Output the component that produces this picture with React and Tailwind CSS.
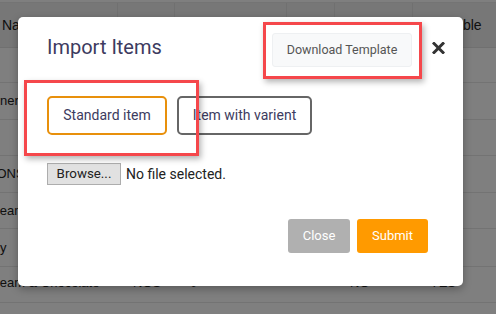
import React from "react";

const rows = [
  { name: "", shift: "ml-0", code: "", qty: "", a: "", b: "", h: "h-[35px]" },
  { name: "Corner", shift: "ml-[-21px]", code: "", qty: "", a: "", b: "", h: "h-[37px]" },
  { name: "", shift: "ml-0", code: "", qty: "", a: "", b: "", h: "h-[36px]" },
  { name: "ADDONS", shift: "ml-[-31px]", code: "", qty: "", a: "", b: "", h: "h-[37px]" },
  { name: "Ice Cream", shift: "ml-[-35px]", code: "", qty: "", a: "", b: "", h: "h-[36px]" },
  { name: "Candy", shift: "ml-[-31px]", code: "", qty: "", a: "", b: "", h: "h-[38px]" },
  { name: "Ice Cream & Chocolate", shift: "ml-[-35px]", code: "NOS", qty: "0", a: "NO", b: "YES", h: "h-[36px] pb-[3px]" },
  { name: "", shift: "ml-0", code: "", qty: "", a: "", b: "", h: "h-[36px]" },
];

const Table = () => (
  <div className="w-full bg-white text-[#222] font-['Liberation_Sans',Arial,sans-serif] text-[13px]">
    <div className="h-[3px] border-b border-[#e8e8e8]" />
    <div className="flex h-[45px] items-center bg-[#eeeeee] border-b border-[#e0e0e0] text-[14px]">
      <div className="w-[118px] pl-[2px] border-r border-[#e0e0e0] h-full flex items-center">Name</div>
      <div className="w-[57px] border-r border-[#e0e0e0] h-full" />
      <div className="w-[112px] border-r border-[#e0e0e0] h-full" />
      <div className="w-[48px] border-r border-[#e0e0e0] h-full" />
      <div className="w-[78px] border-r border-[#e0e0e0] h-full" />
      <div className="flex-1 pl-[12px] h-full flex items-center">Available</div>
    </div>
    {rows.map((r, i) => (
      <div key={i} className={`flex ${r.h} items-center border-b border-[#e6e6e6]`}>
        <div className="w-[133px] shrink-0 overflow-hidden whitespace-nowrap">
          <span className={`inline-block ${r.shift}`}>{r.name}</span>
        </div>
        <div className="w-[57px] shrink-0">{r.code}</div>
        <div className="w-[160px] shrink-0">{r.qty}</div>
        <div className="w-[80px] shrink-0">{r.a}</div>
        <div className="flex-1">{r.b}</div>
      </div>
    ))}
  </div>
);

const CloseIcon = () => (
  <svg width="13" height="12" viewBox="0 0 13 12" className="block">
    <path d="M2 1.5 L11 10.5 M11 1.5 L2 10.5" stroke="#333" strokeWidth="3" strokeLinecap="square" />
  </svg>
);

export default function App() {
  return (
    <div className="relative w-[496px] h-[314px] overflow-hidden bg-white">
      <Table />
      <div className="absolute inset-0 bg-black/50" />

      <div className="absolute left-[18px] top-[17px] w-[445px] h-[269px] bg-white rounded-[5px] shadow-[0_3px_9px_rgba(0,0,0,0.3)] font-['Roboto',sans-serif] px-[29px] pt-[16px]">
        <div className="flex items-start">
          <h2 className="text-[20px] leading-[28px] text-[#3d3b60] font-normal">Import Items</h2>
          <button className="ml-auto mr-[20px] h-[34px] w-[140px] bg-[#f8f9fa] border border-[#eef0f2] rounded-[3px] text-[12.5px] text-[#555]">
            Download Template
          </button>
          <div className="mt-[9px] mr-[-11px]">
            <CloseIcon />
          </div>
        </div>

        <div className="flex gap-[10px] mt-[29px]">
          <button className="h-[39px] w-[120px] border-2 border-[#e8900c] rounded-[5px] text-[14px] text-[#3d3b60]">
            Standard item
          </button>
          <button className="h-[39px] w-[135px] border-2 border-[#666] rounded-[5px] text-[14px] text-[#3d3b60]">
            Item with varient
          </button>
        </div>

        <div className="flex items-center mt-[28px] text-[13.33px] text-[#222]">
          <span className="h-[22px] w-[74px] flex items-center justify-center bg-[#e1e1e1] border border-[#adadad]">
            Browse...
          </span>
          <span className="ml-[5px] text-[14px]">No file selected.</span>
        </div>

        <div className="flex justify-end gap-[7px] mt-[34px] mr-[6px]">
          <button className="h-[34px] w-[62px] bg-[#b0b0b0] rounded-[3px] text-white text-[13px]">Close</button>
          <button className="h-[34px] w-[71px] bg-[#ff9a00] rounded-[3px] text-white text-[13px]">Submit</button>
        </div>
      </div>

      <div className="absolute left-[24px] top-[80px] w-[175px] h-[76px] border-[3px] border-[#f5474b] shadow-[2px_3px_6px_rgba(0,0,0,0.3)]" />
      <div className="absolute left-[263px] top-[22px] w-[159px] h-[57px] border-[3px] border-[#f5474b] shadow-[2px_3px_6px_rgba(0,0,0,0.3)]" />
    </div>
  );
}
